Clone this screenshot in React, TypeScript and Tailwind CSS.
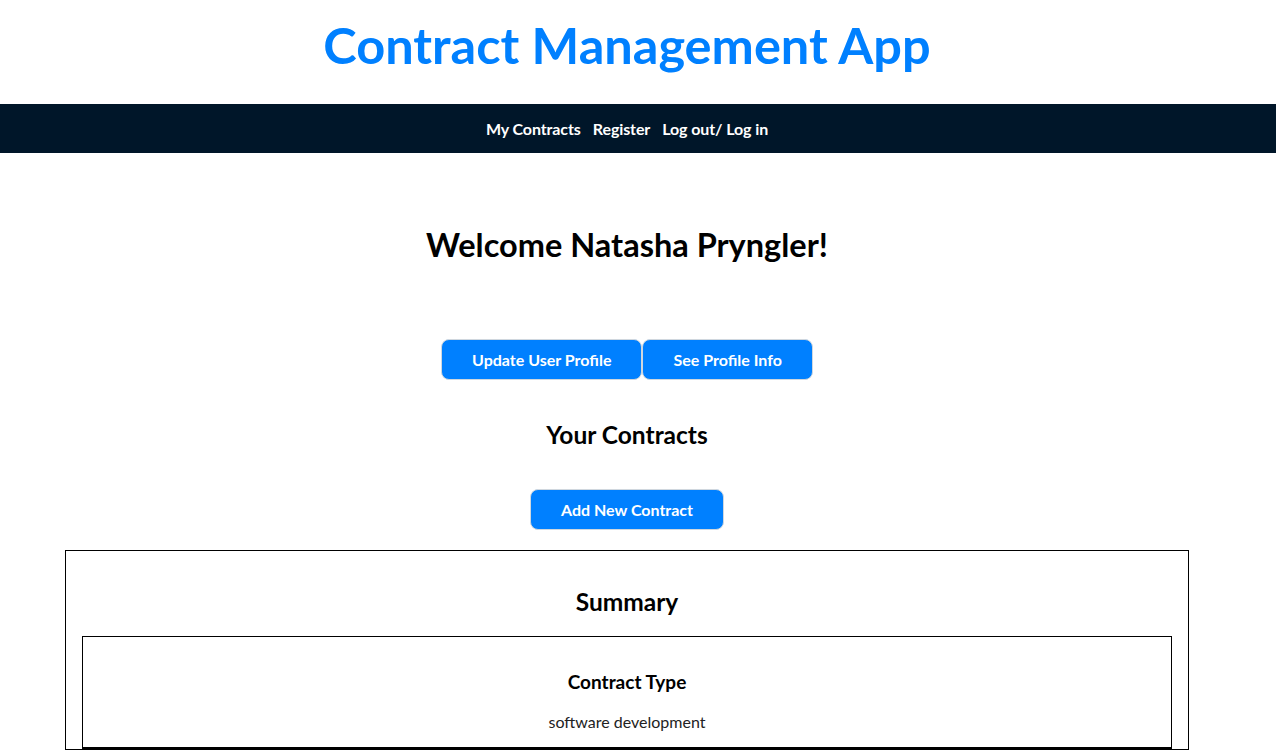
import React from "react";

function Btn({ children }: { children: React.ReactNode }) {
  return (
    <button className="h-[41px] px-[30px] rounded-[8px] bg-[#0080ff] border border-[#d0d7de] text-white font-bold text-[16px]">
      {children}
    </button>
  );
}

export default function App() {
  return (
    <div className="min-h-screen bg-white text-black" style={{ fontFamily: "Lato, 'Noto Sans', sans-serif" }}>
      <div className="w-[1254px]">
        <header className="h-[104px] flex items-center justify-center">
          <h1 className="text-[50.5px] font-bold text-[#0080ff] leading-none -mt-[14px]">Contract Management App</h1>
        </header>
      </div>
      <nav className="h-[49px] bg-[#001629]">
        <div className="w-[1254px] h-full flex items-center justify-center gap-[12px] text-white font-bold text-[16px] tracking-[-0.1px]">
          <a>My Contracts</a>
          <a>Register</a>
          <a>Log out/ Log in</a>
        </div>
      </nav>
      <main className="w-[1254px] flex flex-col items-center">
        <h2 className="mt-[72px] text-[32.5px] font-bold leading-[40px]">Welcome Natasha Pryngler!</h2>
        <div className="mt-[74px] flex">
          <Btn>Update User Profile</Btn>
          <Btn>See Profile Info</Btn>
        </div>
        <h3 className="mt-[40px] text-[24.5px] font-bold leading-[30px]">Your Contracts</h3>
        <div className="mt-[39px]">
          <Btn>Add New Contract</Btn>
        </div>
        <section className="mt-[20px] w-[1124px] border border-black px-[16px] flex flex-col items-center">
          <h3 className="mt-[36px] text-[24.5px] font-bold leading-[30px]">Summary</h3>
          <div className="mt-[19px] w-full border border-black border-b-2 flex flex-col items-center pb-[15px]">
            <h4 className="mt-[33px] text-[19px] font-bold leading-[24px]">Contract Type</h4>
            <p className="mt-[18px] text-[16px] leading-[20px] text-[#222]">software development</p>
          </div>
        </section>
      </main>
    </div>
  );
}
